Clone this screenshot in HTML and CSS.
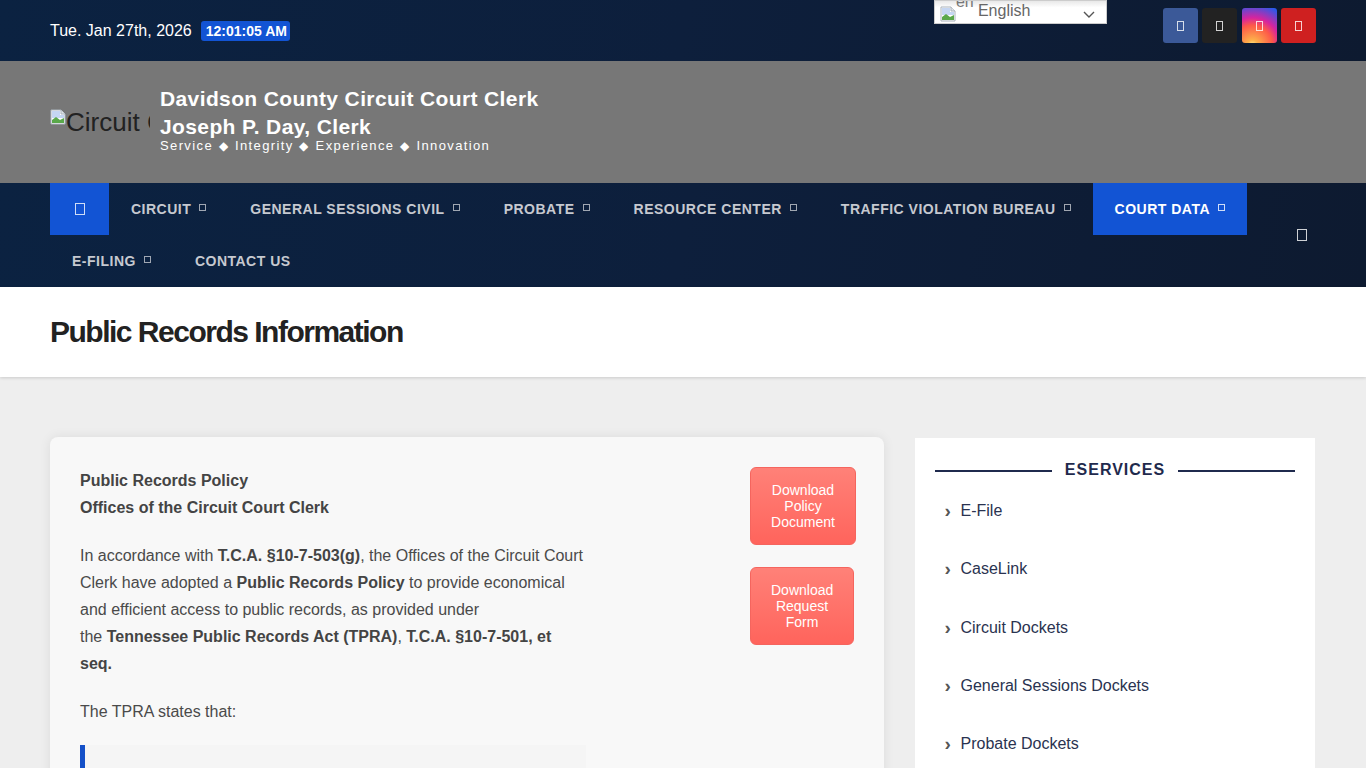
FILE: index.html
```html
<!DOCTYPE html>
<html lang="en">
<head>
<meta charset="utf-8">
<title>Public Records Information</title>
<link rel="stylesheet" href="styles.css">
</head>
<body>
<header class="topbar">
  <span class="date">Tue. Jan 27th, 2026</span>
  <span class="clock">12:01:05 AM</span>
  <div class="translate">
    <span class="flag"><svg class="broken" viewBox="0 0 16 16"><path d="M1 1h10l4 4v10H1z" fill="#fff" stroke="#a9b2bb"/><path d="M11 1v4h4" fill="#dfe3e7" stroke="#a9b2bb"/><path d="M2 2h8v4h4v3H2z" fill="#c5d6f2"/><path d="M2 14v-3l4-3 4 3 4-2v5z" fill="#5aa84a"/></svg><span class="flag-alt">en</span></span>
    <span class="lang">English</span>
    <svg class="chev" viewBox="0 0 12 8"><path d="M1 1l5 5 5-5" fill="none" stroke="#555" stroke-width="1.4"/></svg>
  </div>
  <div class="social">
    <a class="soc fb"><i class="tofu"></i></a>
    <a class="soc x"><i class="tofu"></i></a>
    <a class="soc ig"><i class="tofu"></i></a>
    <a class="soc yt"><i class="tofu"></i></a>
  </div>
</header>

<section class="brand">
  <div class="logo"><svg class="broken" viewBox="0 0 16 16"><path d="M1 1h10l4 4v10H1z" fill="#fff" stroke="#a9b2bb"/><path d="M11 1v4h4" fill="#dfe3e7" stroke="#a9b2bb"/><path d="M2 2h8v4h4v3H2z" fill="#c5d6f2"/><path d="M2 14v-3l4-3 4 3 4-2v5z" fill="#5aa84a"/></svg><span class="logo-alt">Circuit Court</span></div>
  <div class="brand-text">
    <div class="brand-title">Davidson County Circuit Court Clerk</div>
    <div class="brand-title">Joseph P. Day, Clerk</div>
    <div class="brand-sub">Service <span class="dia">◆</span> Integrity <span class="dia">◆</span> Experience <span class="dia">◆</span> Innovation</div>
  </div>
</section>

<nav class="nav">
  <ul class="menu">
    <li class="item active home"><i class="tofu big"></i></li>
    <li class="item">CIRCUIT<i class="tofu small"></i></li>
    <li class="item">GENERAL SESSIONS CIVIL<i class="tofu small"></i></li>
    <li class="item">PROBATE<i class="tofu small"></i></li>
    <li class="item">RESOURCE CENTER<i class="tofu small"></i></li>
    <li class="item">TRAFFIC VIOLATION BUREAU<i class="tofu small"></i></li>
    <li class="item active">COURT DATA<i class="tofu small"></i></li>
    <li class="item">E-FILING<i class="tofu small"></i></li>
    <li class="item">CONTACT US</li>
  </ul>
  <div class="search"><i class="tofu big"></i></div>
</nav>

<section class="pagehead"><h1>Public Records Information</h1></section>

<main class="content">
  <article class="card">
    <div class="copy">
      <p class="lead"><b>Public Records Policy</b><br><b>Offices of the Circuit Court Clerk</b></p>
      <p>In accordance with <b>T.C.A. §10-7-503(g)</b>, the Offices of the Circuit Court Clerk have adopted a <b>Public Records Policy</b> to provide economical and efficient access to public records, as provided under the&nbsp;<b>Tennessee Public Records Act (TPRA)</b>, <b>T.C.A. §10-7-501, et seq.</b></p>
      <p>The TPRA states that:</p>
      <blockquote class="quote"></blockquote>
    </div>
    <div class="actions">
      <a class="btn btn-policy">Download Policy Document</a>
      <a class="btn btn-form">Download Request Form</a>
    </div>
  </article>
  <aside class="side">
    <h2 class="side-head"><span>ESERVICES</span></h2>
    <ul class="links">
      <li>E-File</li>
      <li>CaseLink</li>
      <li>Circuit Dockets</li>
      <li>General Sessions Dockets</li>
      <li>Probate Dockets</li>
    </ul>
  </aside>
</main>
</body>
</html>
```
FILE: styles.css
```css
* { box-sizing: border-box; }
html, body { margin: 0; padding: 0; height: 768px; overflow: hidden; }
body { font-family: "Liberation Sans", Arial, sans-serif; background: #eeeeee; color: #444; }
ul { list-style: none; margin: 0; padding: 0; }

.tofu { display: block; width: 9px; height: 12px; border: 1px solid currentColor; opacity: .8; }
.tofu.small { display: inline-block; width: 7px; height: 7px; margin-left: 8px; vertical-align: 3px; }
.tofu.big { width: 10px; height: 12px; }
.broken { width: 16px; height: 16px; flex: none; display: block; }

.topbar { height: 61px; display: flex; align-items: flex-start; padding: 0 50px; background: linear-gradient(100deg, #0b2241 0%, #0d1f3c 50%, #0d1a30 100%); color: #fff; }
.date { font-size: 16px; line-height: 20px; margin-top: 21px; }
.clock { margin: 21px 0 0 9px; height: 20px; line-height: 20px; padding: 0 3px 0 5px; background: #1254d4; border-radius: 3px; font-size: 14px; font-weight: bold; }
.translate { margin-left: 644px; width: 173px; height: 24px; display: flex; align-items: center; background: linear-gradient(#e8e8e8, #fff 30%); border: 1px solid #ccc; position: relative; overflow: hidden; flex: none; }
.flag { width: 38px; display: flex; padding-left: 5px; margin-top: 4px; flex: none; }
.flag-alt { font-size: 16px; color: #777; margin-top: -12px; line-height: 16px; }
.lang { font-size: 16px; color: #666; margin-left: 5px; margin-top: -3px; }
.chev { width: 12px; height: 8px; margin-left: 53px; margin-top: 5px; flex: none; }
.social { margin-left: 56px; margin-top: 8px; display: flex; gap: 4.33px; flex: none; }
.soc { width: 35px; height: 35px; border-radius: 3px; display: flex; align-items: center; justify-content: center; color: #fff; }
.soc .tofu { width: 7px; height: 10px; }
.fb { background: #3b5998; }
.x { background: #222; }
.ig { background: radial-gradient(circle at 30% 107%, #fdf497 0%, #fdb04a 12%, #fd5949 45%, #d6249f 62%, #285aeb 95%); }
.yt { background: #cf2020; }

.brand { height: 122px; background: #777777; padding: 0 50px; display: flex; align-items: center; }
.logo { width: 100px; height: 30px; overflow: hidden; white-space: nowrap; display: flex; align-items: flex-start; color: #222; margin-top: 3px; }
.logo-alt { font-size: 26px; line-height: 26px; }
.brand-text { margin: 0 0 6px 10px; color: #fff; }
.brand-title { font-size: 21px; font-weight: bold; line-height: 28px; letter-spacing: .38px; }
.brand-sub { font-size: 13px; line-height: 14px; letter-spacing: 1.38px; margin-top: -2px; color: #fff; }
.dia { font-size: 12px; margin: 0 .8px; }

.nav { height: 104px; padding: 0 50px; display: flex; align-items: center; background: linear-gradient(100deg, #0b2241 0%, #0d1f3c 50%, #0d1a30 100%); }
.menu { display: flex; flex-wrap: wrap; width: 1240px; flex: none; }
.item { height: 52px; line-height: 52px; padding: 0 22px; font-size: 14px; font-weight: bold; letter-spacing: .5px; color: #c6c9d0; white-space: nowrap; }
.item.active { background: #1254d4; color: #fff; }
.home { width: 59px; padding: 0; display: flex; align-items: center; justify-content: center; }
.search { color: #fff; margin-left: 7px; }

.pagehead { height: 90px; background: #fff; padding: 0 50px; display: flex; align-items: center; box-shadow: 0 1px 3px rgba(0,0,0,.15); position: relative; }
h1 { margin: 0; font-size: 30px; font-weight: bold; letter-spacing: -1.5px; color: #222; }

.content { display: flex; align-items: flex-start; padding: 60px 51px 0 50px; gap: 31px; }
.card { width: 834px; height: 600px; background: #f8f8f8; border-radius: 8px; box-shadow: 0 0 12px rgba(0,0,0,.08); padding: 30px 28px 30px 30px; display: flex; justify-content: space-between; flex: none; }
.copy { width: 506px; font-size: 16px; line-height: 27px; color: #4a4a4a; }
.copy p { margin: 0 0 21px; }
.copy b { color: #444; }
.quote { margin: -1px 0 0; height: 200px; border-left: 5px solid #1450c8; background: #f5f5f5; }
.actions { display: flex; flex-direction: column; align-items: flex-start; gap: 22px; }
.btn { display: block; padding: 14px 20px; font-size: 14px; line-height: 16px; text-align: center; color: #fff; background: linear-gradient(#ff8178, #ff645c); border: 1px solid #f5655e; border-radius: 6px; }
.btn-policy { width: 106px; height: 78px; }
.btn-form { width: 104px; height: 78px; }

.side { width: 400px; height: 600px; margin-top: 1px; background: #fff; padding: 21px 20px 20px; flex: none; }
.side-head { margin: 0; display: flex; align-items: center; gap: 13px; font-size: 16px; font-weight: bold; line-height: 22px; letter-spacing: 1px; color: #1f2a4d; }
.side-head::before, .side-head::after { content: ""; flex: 1; height: 2px; background: #1f2a4d; margin-top: 2px; }
.links { padding: 0 10px 0 9.5px; margin-top: 18px; }
.links li { height: 58.3px; font-size: 16px; line-height: 24px; color: #2a3350; display: flex; }
.links li::before { content: "›"; width: 16px; flex: none; font-weight: bold; font-size: 19px; color: #555; }
```
